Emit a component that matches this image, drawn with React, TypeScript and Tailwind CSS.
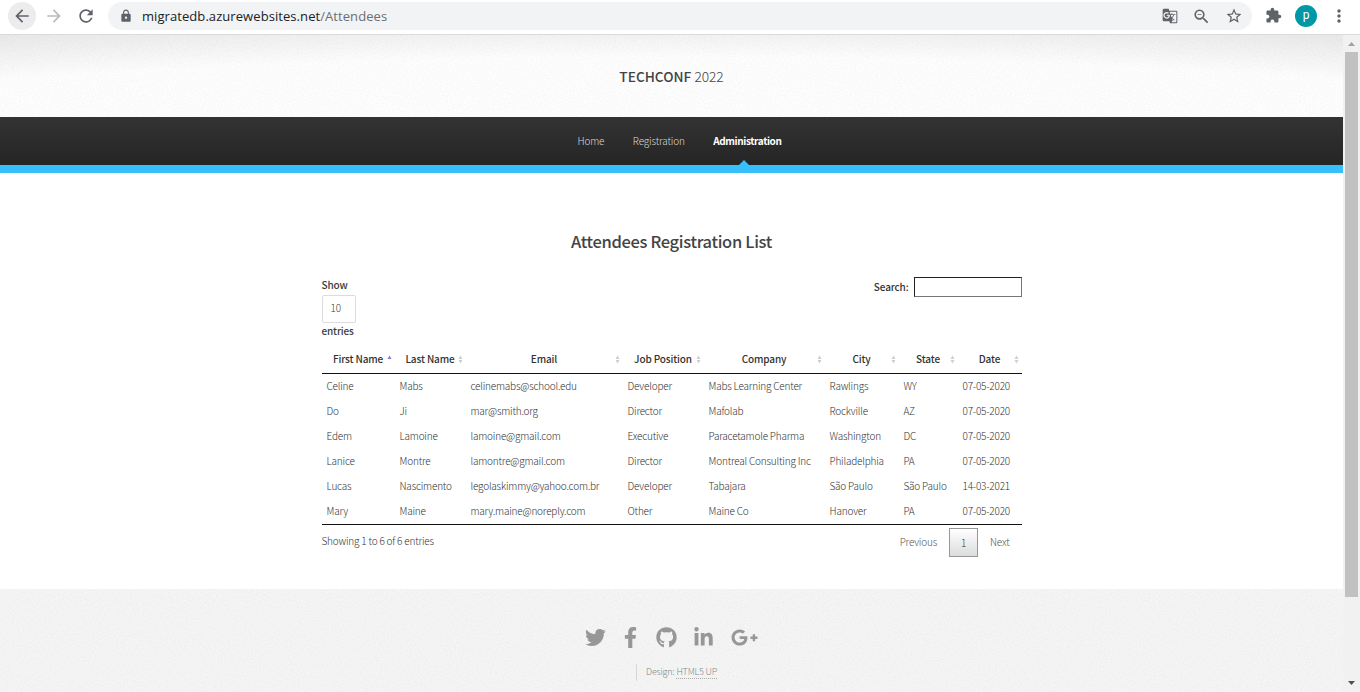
import React from "react";
import { FaTwitter, FaFacebookF, FaGithub, FaLinkedinIn, FaGooglePlusG } from "react-icons/fa";
import {
  MdArrowBack,
  MdArrowForward,
  MdRefresh,
  MdLock,
  MdGTranslate,
  MdZoomOut,
  MdStarBorder,
  MdExtension,
  MdMoreVert,
} from "react-icons/md";

const columns = ["First Name", "Last Name", "Email", "Job Position", "Company", "City", "State", "Date"];

const rows = [
  ["Celine", "Mabs", "celinemabs@school.edu", "Developer", "Mabs Learning Center", "Rawlings", "WY", "07-05-2020"],
  ["Do", "Ji", "mar@smith.org", "Director", "Mafolab", "Rockville", "AZ", "07-05-2020"],
  ["Edem", "Lamoine", "lamoine@gmail.com", "Executive", "Paracetamole Pharma", "Washington", "DC", "07-05-2020"],
  ["Lanice", "Montre", "lamontre@gmail.com", "Director", "Montreal Consulting Inc", "Philadelphia", "PA", "07-05-2020"],
  ["Lucas", "Nascimento", "legolaskimmy@yahoo.com.br", "Developer", "Tabajara", "São Paulo", "São Paulo", "14-03-2021"],
  ["Mary", "Maine", "mary.maine@noreply.com", "Other", "Maine Co", "Hanover", "PA", "07-05-2020"],
];

const grid = "grid grid-cols-[73px_71px_157px_81px_121px_74px_59px_64px]";

function Grain({ id }: { id: string }) {
  return (
    <svg className="pointer-events-none absolute inset-0 h-full w-full opacity-[0.022]" aria-hidden="true">
      <filter id={id}>
        <feTurbulence type="fractalNoise" baseFrequency="0.6" numOctaves="2" stitchTiles="stitch" />
        <feColorMatrix values="0 0 0 0 0  0 0 0 0 0  0 0 0 0 0  2 0 0 0 -0.6" />
      </filter>
      <rect width="100%" height="100%" filter={`url(#${id})`} />
    </svg>
  );
}

function BrowserBar() {
  return (
    <div className="flex h-[35px] shrink-0 items-start border-b border-[#dadcda] bg-white pt-[2px] text-[#5f6368]">
      <div className="ml-2 flex size-7 items-center justify-center rounded-full bg-[#ececec]">
        <MdArrowBack size={20} />
      </div>
      <MdArrowForward size={20} className="mt-1 ml-2 text-[#babcbe]" />
      <MdRefresh size={20} className="mt-1 ml-3" />
      <div className="ml-3 flex h-7 w-[1144px] items-center rounded-full bg-[#f1f3f4] pr-[9px]">
        <MdLock size={14} className="ml-[11px]" />
        <div className="ml-[9px] flex-1 font-['Open_Sans',sans-serif] text-[13px] leading-7 tracking-[0.07px] text-[#202124]">
          migratedb.azurewebsites.net<span className="text-[#6b6f73]">/Attendees</span>
        </div>
        <MdGTranslate size={16} />
        <MdZoomOut size={19} className="ml-[14px]" />
        <MdStarBorder size={18} className="ml-[14px]" />
      </div>
      <MdExtension size={17} className="mt-[5px] ml-[13px]" />
      <div className="mt-[3px] ml-[13px] flex size-[22px] items-center justify-center rounded-full bg-[#0097a7] pb-[2px] font-['Roboto',sans-serif] text-[12px] leading-none text-white">
        p
      </div>
      <MdMoreVert size={20} className="mt-1 ml-3" />
    </div>
  );
}

function SortMark({ active }: { active: boolean }) {
  return (
    <svg width="5" height="9" viewBox="0 0 5 9" className="absolute top-[10px] right-[3px]">
      {active ? (
        <path d="M0.5 4 2.5 0.5 4.5 4Z" fill="#8080dc" />
      ) : (
        <path d="M0.5 4 2.5 0.5 4.5 4ZM0.5 5 2.5 8.5 4.5 5Z" fill="#cfcfcf" />
      )}
    </svg>
  );
}

function AttendeesTable() {
  return (
    <div>
      <div className={`${grid} h-[29px] border-b border-[#111]`}>
        {columns.map((c, i) => (
          <div
            key={c}
            className="relative text-center text-[10px] leading-[28px] font-medium tracking-[-0.13px] whitespace-nowrap text-[#333]"
          >
            {c}
            <SortMark active={i === 0} />
          </div>
        ))}
      </div>
      <div className="border-b border-[#111]">
        {rows.map((r) => (
          <div key={r[0]} className={`${grid} h-[25px]`}>
            {r.map((v, i) => (
              <div
                key={i}
                className="pl-[5px] text-[10px] leading-[24px] font-light tracking-[-0.2px] whitespace-nowrap text-[#333]"
              >
                {v}
              </div>
            ))}
          </div>
        ))}
      </div>
    </div>
  );
}

function Page() {
  return (
    <div className="flex w-[1343px] flex-col font-['Noto_Sans_CJK_SC',sans-serif] text-[#3c3c3c]">
      <header className="relative h-[82px] bg-[radial-gradient(ellipse_1685px_278px_at_50%_300px,#fefefe_100%,#e9e9e9_115%)]">
        <Grain id="grain-header" />
        <h1 className="text-center text-[13.7px] leading-[82px] font-light text-[#444]">
          <span className="font-medium">TECHCONF</span> 2022
        </h1>
      </header>
      <nav className="flex h-14 justify-center gap-[28.5px] border-b-8 border-[#37bff9] bg-linear-to-b from-[#333] to-[#252525] pl-[16px] text-[10px] leading-[48px] font-light tracking-[-0.15px] text-[#d8d8d8]">
        <span>Home</span>
        <span>Registration</span>
        <span className="relative font-bold tracking-[-0.38px] text-white">
          Administration
          <svg width="10" height="5" viewBox="0 0 10 5" className="absolute top-[43px] left-[26px]">
            <path d="M0 5 5 0 10 5Z" fill="#37bff9" />
          </svg>
        </span>
      </nav>
      <main className="flex h-[416px] flex-col items-center bg-white">
        <h2 className="mt-[54px] text-[16.5px] leading-7 font-medium tracking-[-0.33px] text-[#444]">
          Attendees Registration List
        </h2>
        <div className="mt-[20px] flex h-[70px] w-[700px] justify-between text-[10px] font-medium tracking-[-0.15px]">
          <div className="flex flex-col">
            <span className="h-[20px] leading-[20px]">Show</span>
            <div className="h-7 w-[34px] rounded-[2px] border border-[#dcdcdc] pl-2 text-[10px] leading-[24px] font-light">10</div>
            <span className="leading-[16px]">entries</span>
          </div>
          <div className="mt-[2px] flex h-5 items-center gap-[5px] text-[#333]">
            <span className="leading-[18px]">Search:</span>
            <input
              aria-label="Search"
              className="h-5 w-[108px] border border-t-[#222] border-r-[#767676] border-b-[#767676] border-l-[#222] bg-white"
            />
          </div>
        </div>
        <div className="w-[700px]">
          <AttendeesTable />
          <div className="flex justify-between text-[10px] font-light tracking-[-0.2px]">
            <span className="leading-[32px] text-[#333]">Showing 1 to 6 of 6 entries</span>
            <div className="mt-[3px] mr-3 flex text-[#555]">
              <span className="leading-[28px]">Previous</span>
              <span className="mx-3 h-[29px] w-[29px] border border-[#979797] bg-linear-to-b from-white to-[#dcdcdc] text-center leading-[27px] text-[#333]">
                1
              </span>
              <span className="leading-[28px]">Next</span>
            </div>
          </div>
        </div>
      </main>
      <footer className="relative flex h-[103px] flex-col items-center bg-[#f5f5f5]">
        <Grain id="grain-footer" />
        <div className="mt-[37px] flex h-[22px] items-center text-[#999]">
          <FaTwitter size={21} />
          <FaFacebookF size={21} className="ml-[14px]" />
          <FaGithub size={21} className="ml-[15px]" />
          <FaLinkedinIn size={21} className="ml-4" />
          <FaGooglePlusG size={27} className="ml-[17px]" />
        </div>
        <div className="mt-4 ml-[91px] flex h-[17px] w-[162px] border-l border-[#d8d8d8] pl-[9px] text-[9px] leading-[16px] font-light tracking-[-0.17px] text-[#888]">
          <span>
            Design: <span className="inline-block h-[15px] border-b border-dotted border-[#aaa]">HTML5 UP</span>
          </span>
        </div>
      </footer>
    </div>
  );
}

function Scrollbar() {
  return (
    <div className="flex w-[17px] flex-col items-center bg-[#f1f1f1]">
      <svg width="17" height="17" viewBox="0 0 17 17">
        <path d="M5 11 8.5 7 12 11Z" fill="#a3a3a3" />
      </svg>
      <div className="h-[545px] w-[13px] bg-[#c1c1c1]" />
      <svg width="17" height="17" viewBox="0 0 17 17" className="mt-auto">
        <path d="M5 6 8.5 10 12 6Z" fill="#505050" />
      </svg>
    </div>
  );
}

export default function App() {
  return (
    <div className="flex h-[692px] w-[1360px] flex-col overflow-hidden bg-white">
      <BrowserBar />
      <div className="flex min-h-0 flex-1">
        <Page />
        <Scrollbar />
      </div>
    </div>
  );
}
